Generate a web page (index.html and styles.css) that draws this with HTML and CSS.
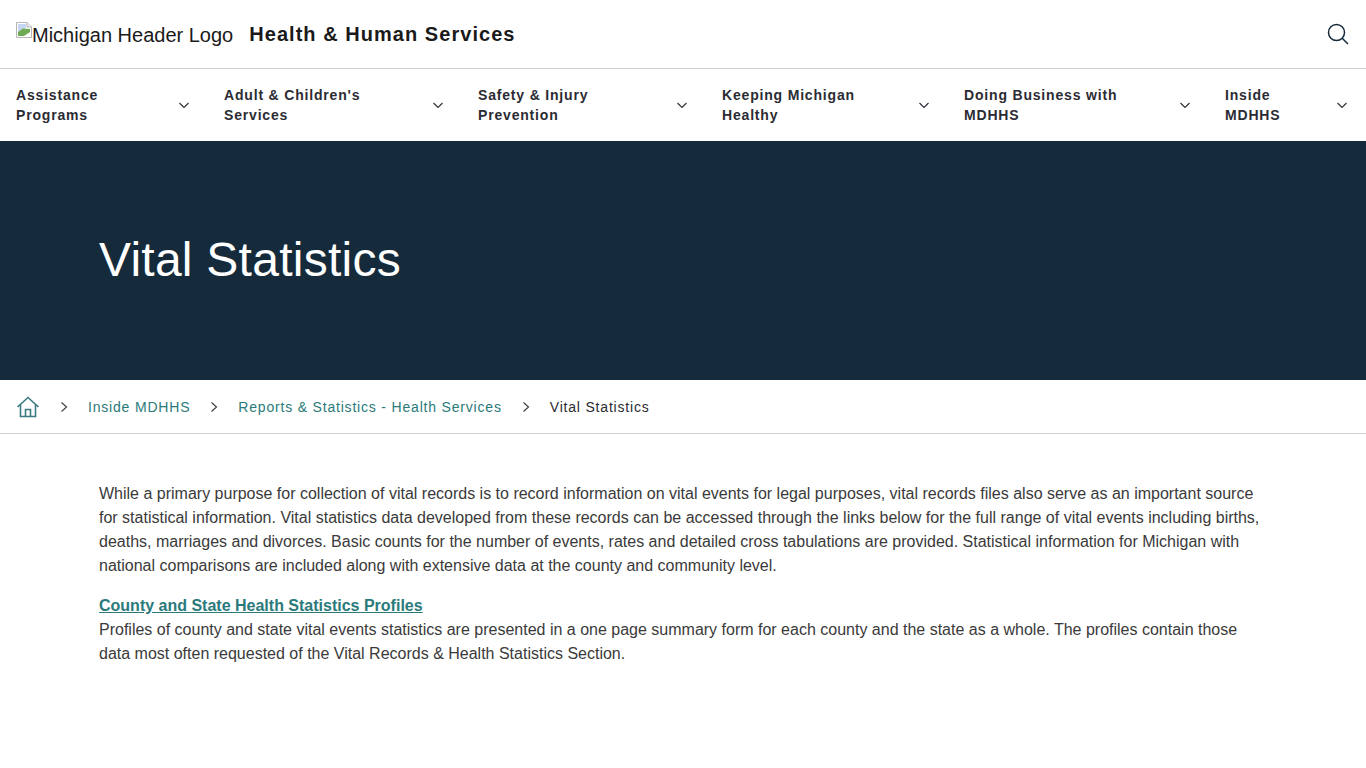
FILE: index.html
```html
<!DOCTYPE html>
<html lang="en">
<head>
    <meta charset="UTF-8">
    <meta name="viewport" content="width=device-width, initial-scale=1.0">
    <title>Vital Statistics</title>
    <link rel="stylesheet" href="styles.css">
</head>
<body>
    <!-- Header -->
    <header class="site-header">
        <div class="brand">
            <span class="logo-alt">
                <svg class="broken-img" width="16" height="16" viewBox="0 0 16 16" aria-hidden="true">
                    <path d="M0.5 0.5H11L15.5 5V15.5H0.5Z" fill="#fff" stroke="#b5b5b5"/>
                    <path d="M11 0.5V5H15.5" fill="#e8e8e8" stroke="#b5b5b5"/>
                    <path d="M2 2H10V6L2 10Z" fill="#c4d6f2"/>
                    <path d="M2 14V10L7 6.5L14 7V10L8 14Z" fill="#6eaa52"/>
                </svg>Michigan Header Logo
            </span>
            <span class="site-name">Health &amp; Human Services</span>
        </div>
        <button class="search-btn" aria-label="Search">
            <svg width="24" height="24" viewBox="0 0 24 24" fill="none" stroke="#15293a" stroke-width="1.5">
                <circle cx="10.5" cy="10.5" r="8"/>
                <path d="M16.2 16.2L22 22"/>
            </svg>
        </button>
    </header>

    <!-- Main nav -->
    <nav class="main-nav">
        <a class="nav-item" href="#"><span>Assistance<br>Programs</span><svg class="chev" width="12" height="12" viewBox="0 0 12 12"><path d="M1.5 4L6 8.5L10.5 4"/></svg></a>
        <a class="nav-item" href="#"><span>Adult &amp; Children's<br>Services</span><svg class="chev" width="12" height="12" viewBox="0 0 12 12"><path d="M1.5 4L6 8.5L10.5 4"/></svg></a>
        <a class="nav-item" href="#"><span>Safety &amp; Injury<br>Prevention</span><svg class="chev" width="12" height="12" viewBox="0 0 12 12"><path d="M1.5 4L6 8.5L10.5 4"/></svg></a>
        <a class="nav-item" href="#"><span>Keeping Michigan<br>Healthy</span><svg class="chev" width="12" height="12" viewBox="0 0 12 12"><path d="M1.5 4L6 8.5L10.5 4"/></svg></a>
        <a class="nav-item" href="#"><span>Doing Business with<br>MDHHS</span><svg class="chev" width="12" height="12" viewBox="0 0 12 12"><path d="M1.5 4L6 8.5L10.5 4"/></svg></a>
        <a class="nav-item" href="#"><span>Inside<br>MDHHS</span><svg class="chev" width="12" height="12" viewBox="0 0 12 12"><path d="M1.5 4L6 8.5L10.5 4"/></svg></a>
    </nav>

    <!-- Hero -->
    <section class="hero">
        <h1>Vital Statistics</h1>
    </section>

    <!-- Breadcrumb -->
    <div class="breadcrumb">
        <a class="home-link" href="#" aria-label="Home">
            <svg width="24" height="24" viewBox="0 0 24 24" fill="none" stroke="#3a7a80" stroke-width="1.6">
                <path d="M1.5 12L12 2.5L22.5 12"/>
                <path d="M4.5 9.5V21.5H19.5V9.5"/>
                <path d="M9.5 21.5V14.5H14.5V21.5"/>
            </svg>
        </a>
        <svg class="crumb-sep" width="10" height="12" viewBox="0 0 10 12"><path d="M2.5 1.5L7.5 6L2.5 10.5"/></svg>
        <a href="#">Inside MDHHS</a>
        <svg class="crumb-sep" width="10" height="12" viewBox="0 0 10 12"><path d="M2.5 1.5L7.5 6L2.5 10.5"/></svg>
        <a href="#">Reports &amp; Statistics - Health Services</a>
        <svg class="crumb-sep" width="10" height="12" viewBox="0 0 10 12"><path d="M2.5 1.5L7.5 6L2.5 10.5"/></svg>
        <span>Vital Statistics</span>
    </div>

    <!-- Main Content -->
    <main class="content">
        <p>While a primary purpose for collection of vital records is to record information on vital events for legal purposes, vital records files also serve as an important source for statistical information. Vital statistics data developed from these records can be accessed through the links below for the full range of vital events including births, deaths, marriages and divorces. Basic counts for the number of events, rates and detailed cross tabulations are provided. Statistical information for Michigan with national comparisons are included along with extensive data at the county and community level.</p>
        <p><a class="profile-link" href="#">County and State Health Statistics Profiles</a><br>Profiles of county and state vital events statistics are presented in a one page summary form for each county and the state as a whole. The profiles contain those data most often requested of the Vital Records &amp; Health Statistics Section.</p>
    </main>
</body>
</html>
```

FILE: styles.css
```css
/* General Styles */
body {
    font-family: 'Liberation Sans', Arial, sans-serif;
    margin: 0;
    background-color: #fff;
    color: #3a3a3a;
}

a {
    color: #2b7a7b;
    text-decoration: none;
}

.site-header {
    display: flex;
    justify-content: space-between;
    align-items: center;
    height: 68px;
    padding: 0 16px;
    border-bottom: 1px solid #cfcfcf;
}

.brand {
    display: flex;
    align-items: center;
    gap: 16px;
}

.logo-alt {
    font-size: 20px;
    color: #1a1a1a;
}

.broken-img {
    vertical-align: 4px;
}

.site-name {
    font-size: 20px;
    font-weight: bold;
    letter-spacing: 1.04px;
    color: #1a1a1a;
}

.search-btn {
    display: flex;
    padding: 0;
    border: none;
    background: none;
}

.main-nav {
    display: grid;
    grid-template-columns: 208px 254px 244px 242px 261px 1fr;
    height: 72px;
    padding: 0 16px;
    align-items: center;
}

.nav-item {
    display: flex;
    align-items: center;
    justify-content: space-between;
    padding-right: 34px;
    font-size: 14px;
    font-weight: bold;
    line-height: 20px;
    letter-spacing: 0.82px;
    color: #2b2b33;
}

.nav-item:last-child {
    padding-right: 2px;
}

.chev {
    fill: none;
    stroke: #2b2b33;
    stroke-width: 1.1;
}

.hero {
    display: flex;
    align-items: center;
    height: 236px;
    padding: 0 99px 3px;
    background-color: #152b3c;
}

.hero h1 {
    margin: 0;
    font-size: 48px;
    font-weight: normal;
    letter-spacing: 0.25px;
    color: #fff;
}

.breadcrumb {
    display: flex;
    align-items: center;
    gap: 19px;
    height: 53px;
    padding: 0 16px;
    border-bottom: 1px solid #cfcfcf;
    font-size: 14px;
    letter-spacing: 0.81px;
    color: #2b2b33;
}

.home-link {
    display: flex;
}

.crumb-sep {
    fill: none;
    stroke: #444;
    stroke-width: 1.2;
}

.content {
    padding: 48px 99px 0;
    font-size: 16px;
    line-height: 24px;
}

.content p {
    margin: 0 0 16px;
}

.profile-link {
    font-weight: bold;
    text-decoration: underline;
}
```
